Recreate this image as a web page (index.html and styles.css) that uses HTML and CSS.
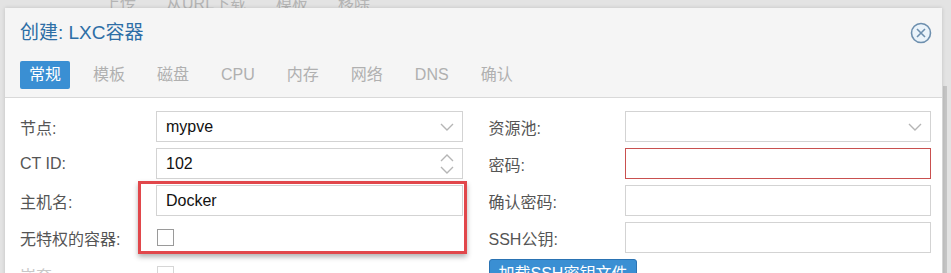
FILE: index.html
```html
<!DOCTYPE html>
<html lang="zh-CN">
<head>
    <meta charset="UTF-8">
    <title>创建: LXC容器</title>
    <link rel="stylesheet" href="styles.css">
</head>
<body>
    <div class="page">
        <div class="page-bar">
            <span>上传</span>
            <span>从URL下载</span>
            <span>模板</span>
            <span>移除</span>
        </div>
        <div class="page-side"></div>
    </div>

    <div class="window">
        <div class="win-head">
            <div class="win-title">创建: LXC容器</div>
            <span class="win-close">
                <svg width="22" height="22" viewBox="0 0 22 22">
                    <circle cx="11" cy="11" r="9.5" fill="#eaf3fa" stroke="#6d8fae" stroke-width="1.6"/>
                    <path d="M7 7 L15 15 M15 7 L7 15" stroke="#6d8fae" stroke-width="1.6" fill="none"/>
                </svg>
            </span>
            <ul class="tabs">
                <li class="on">常规</li>
                <li>模板</li>
                <li>磁盘</li>
                <li>CPU</li>
                <li>内存</li>
                <li>网络</li>
                <li>DNS</li>
                <li>确认</li>
            </ul>
        </div>

        <div class="win-body">
            <div class="col">
                <div class="row">
                    <label>节点:</label>
                    <div class="field">mypve
                        <svg class="trigger" width="14" height="8" viewBox="0 0 14 8"><polyline points="1,1 7,7 13,1" fill="none" stroke="#b5b5b5" stroke-width="1.4"/></svg>
                    </div>
                </div>
                <div class="row">
                    <label>CT ID:</label>
                    <div class="field">102
                        <svg class="trigger" width="14" height="22" viewBox="0 0 14 22"><polyline points="1,8 7,2 13,8" fill="none" stroke="#b5b5b5" stroke-width="1.4"/><polyline points="1,14 7,20 13,14" fill="none" stroke="#b5b5b5" stroke-width="1.4"/></svg>
                    </div>
                </div>
                <div class="row">
                    <label>主机名:</label>
                    <div class="field">Docker</div>
                </div>
                <div class="row">
                    <label>无特权的容器:</label>
                    <div class="check"><span class="box"></span></div>
                </div>
                <div class="row off">
                    <label>嵌套:</label>
                    <div class="check"><span class="box"></span></div>
                </div>
            </div>

            <div class="col">
                <div class="row">
                    <label>资源池:</label>
                    <div class="field">
                        <svg class="trigger" width="14" height="8" viewBox="0 0 14 8"><polyline points="1,1 7,7 13,1" fill="none" stroke="#b5b5b5" stroke-width="1.4"/></svg>
                    </div>
                </div>
                <div class="row">
                    <label>密码:</label>
                    <div class="field invalid"></div>
                </div>
                <div class="row">
                    <label>确认密码:</label>
                    <div class="field"></div>
                </div>
                <div class="row">
                    <label>SSH公钥:</label>
                    <div class="field"></div>
                </div>
                <div class="row">
                    <span class="btn">加载SSH密钥文件</span>
                </div>
            </div>

            <div class="mark"></div>
        </div>
    </div>
</body>
</html>
```

FILE: styles.css
```css
body,ul,li{margin:0;padding:0;}
li{list-style: none;}
body{
    width: 951px;
    height: 273px;
    overflow: hidden;
    background-color: #e3e3e3;
    font-family: "Liberation Sans", "Noto Sans CJK SC", sans-serif;
    position: relative;
}
.page-bar{
    display: flex;
    gap: 30px;
    padding-left: 104px;
    margin-top: -10px;
    height: 18px;
    font-size: 16px;
    color: #b4b4b4;
}
.page-side{
    position: absolute;
    right: 4px;
    top: 86px;
    width: 4px;
    height: 200px;
    background-color: #c4c4c4;
}
.window{
    position: absolute;
    left: 5px;
    top: 8px;
    width: 937px;
    height: 300px;
    background-color: #fff;
    box-shadow: 0 0 4px rgba(0,0,0,0.15);
}
.win-head{
    position: relative;
    background-color: #f5f5f5;
    padding: 14px 15px 8px;
    border-bottom: 1px solid #d9d9d9;
}
.win-title{
    height: 22px;
    line-height: 22px;
    font-size: 19px;
    color: #2d6ea6;
}
.win-close{
    position: absolute;
    right: 10px;
    top: 14px;
    width: 22px;
    height: 22px;
}
.tabs{
    display: flex;
    gap: 14px;
    margin-top: 17px;
}
.tabs li{
    height: 28px;
    line-height: 28px;
    padding: 0 9px;
    font-size: 16px;
    color: #b0b0b0;
    border-radius: 2px;
}
.tabs li.on{
    background-color: #3a8fd3;
    color: #fff;
}
.win-body{
    position: relative;
    display: flex;
    gap: 26px;
    padding: 13px 11px 0 15px;
}
.col{
    flex: 1;
    display: flex;
    flex-direction: column;
    gap: 6px;
}
.row{
    display: flex;
    align-items: center;
    height: 31px;
}
.row label{
    width: 136px;
    flex: none;
    font-size: 16px;
    color: #555;
}
.row.off label{
    color: #c8c8c8;
}
.field{
    position: relative;
    flex: 1;
    height: 29px;
    line-height: 29px;
    padding-left: 9px;
    border: 1px solid #d3d3d3;
    font-size: 16px;
    color: #111;
    background-color: #fff;
}
.field.invalid{
    border-color: #c9504f;
}
.trigger{
    position: absolute;
    right: 8px;
    top: 50%;
    transform: translateY(-50%);
}
.check{
    flex: 1;
    padding-left: 1px;
}
.check .box{
    display: block;
    width: 15px;
    height: 15px;
    border: 1px solid #9a9a9a;
    background-color: #fff;
}
.row.off .box{
    border-color: #d6d6d6;
}
.btn{
    align-self: flex-start;
    height: 28px;
    line-height: 28px;
    padding: 0 9px;
    background-color: #3a8fd3;
    border: 1px solid #2a73b3;
    border-radius: 3px;
    color: #fff;
    font-size: 16px;
}
.mark{
    position: absolute;
    left: 133px;
    top: 83px;
    width: 323px;
    height: 67px;
    border: 3px solid #e1474b;
    box-shadow: 0 3px 5px rgba(0,0,0,0.3);
}
```
